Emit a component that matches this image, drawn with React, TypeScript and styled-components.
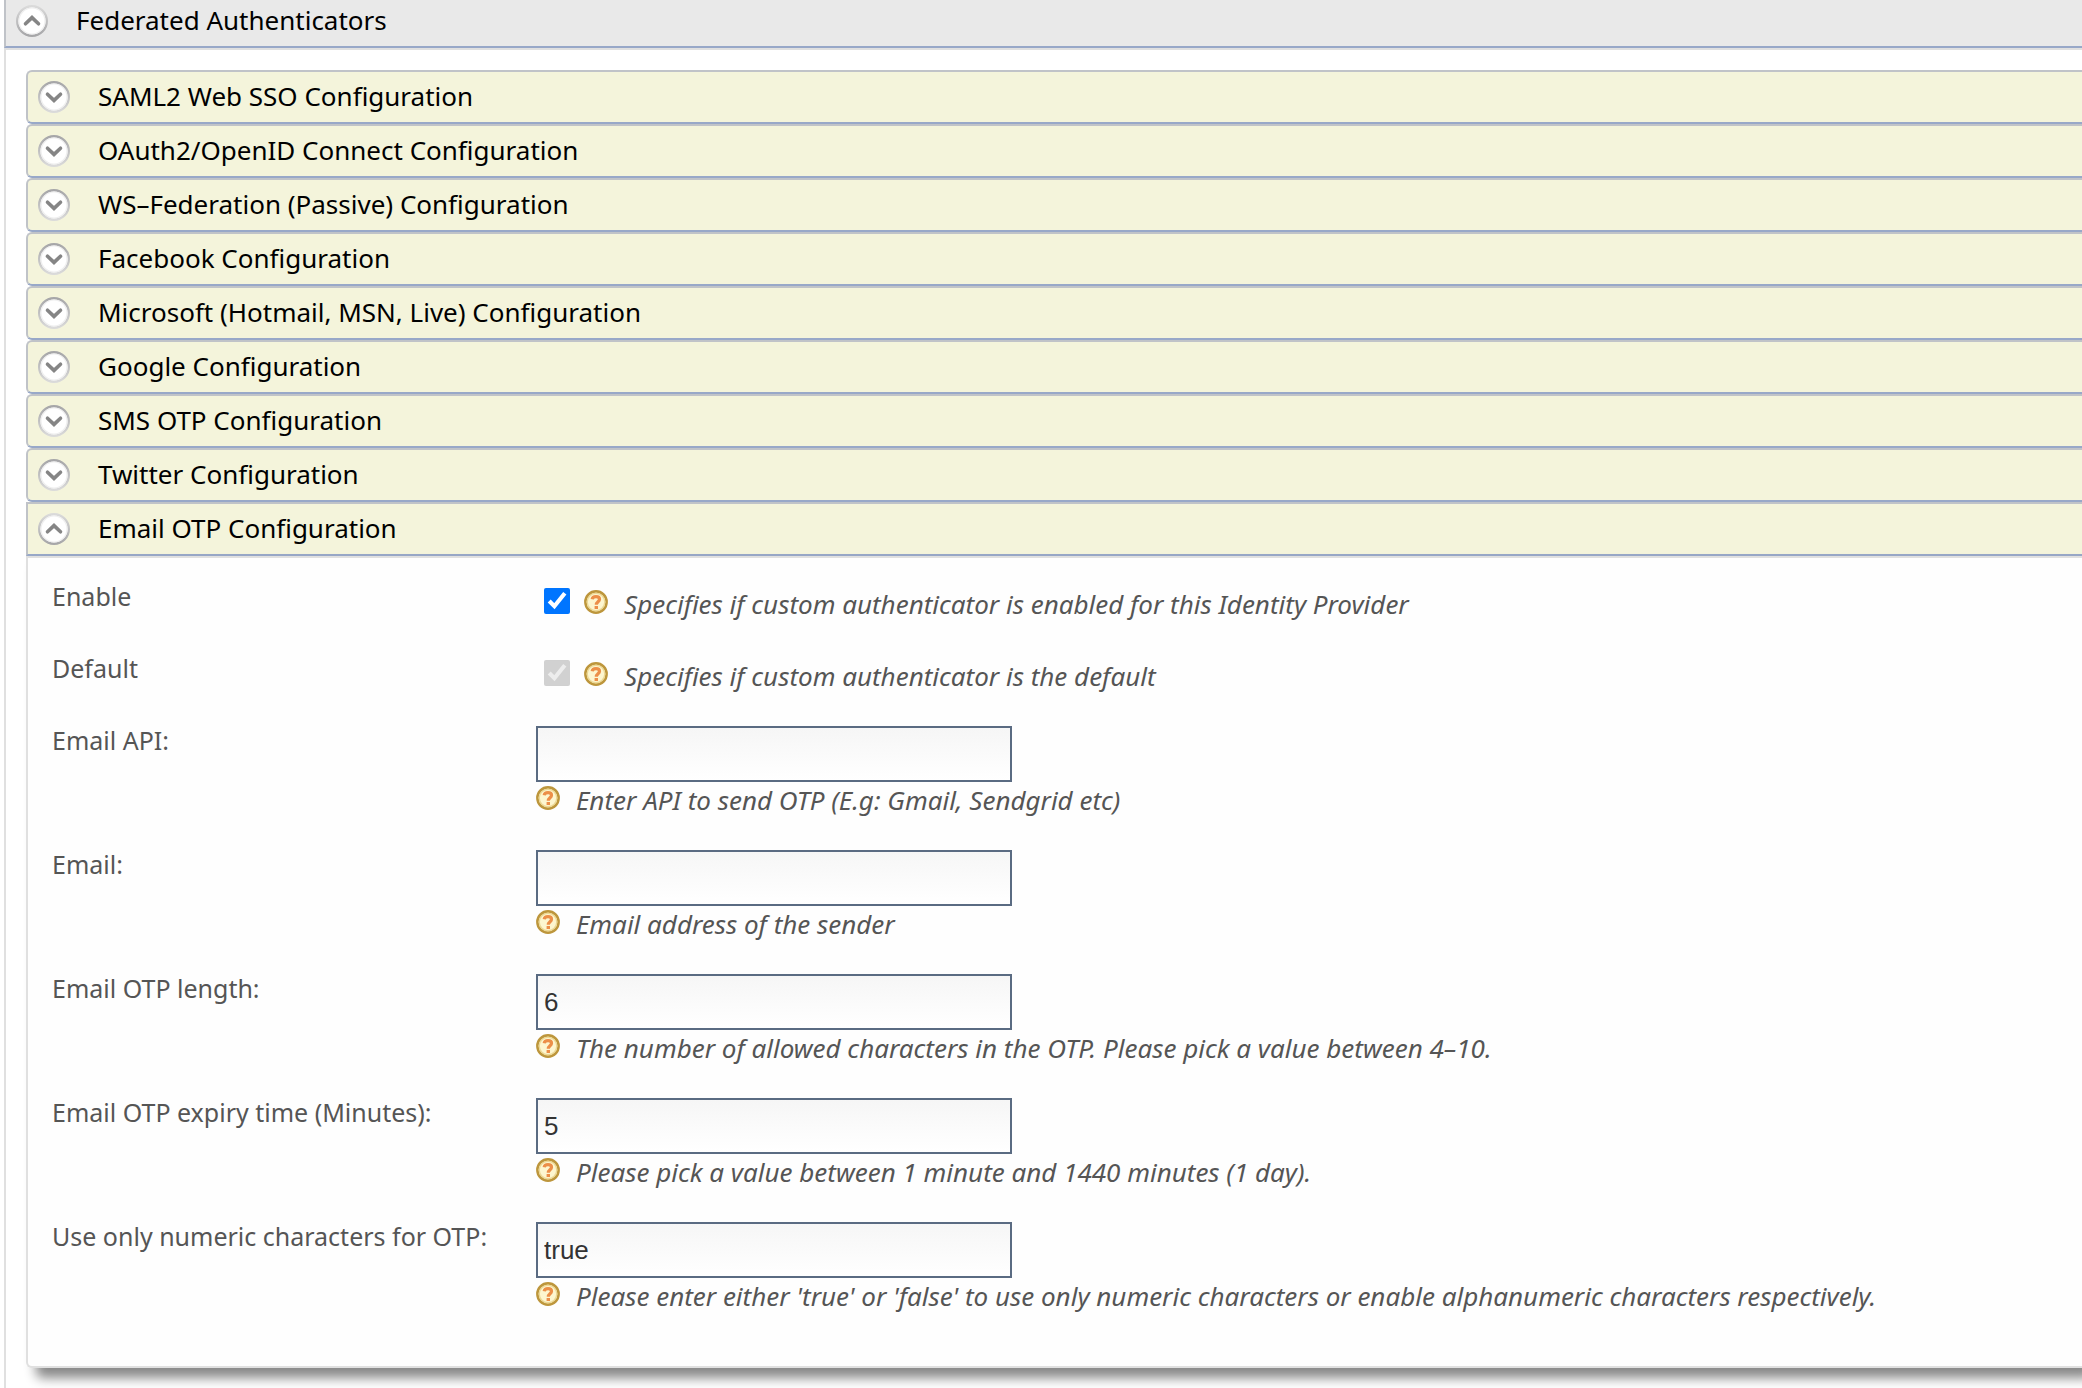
import React, { useId, useState } from "react";
import styled, { createGlobalStyle } from "styled-components";

const GlobalStyle = createGlobalStyle`
  *, *::before, *::after { box-sizing: border-box; }
  body {
    margin: 0;
    background: #fff;
    color: #555;
    font-family: "Noto Sans", "Open Sans", sans-serif;
    font-size: 25px;
    line-height: 28px;
  }
`;

const Page = styled.main`
  display: flex;
  flex-direction: column;
  min-height: 100vh;
  padding-left: 4px;
  overflow: hidden;
`;

const SectionHeading = styled.h2`
  margin: 0;
  font-size: 26px;
  font-weight: 400;
`;

const SectionToggle = styled.button`
  display: flex;
  align-items: center;
  gap: 28px;
  width: 100%;
  height: 48px;
  padding: 0 10px 4px;
  border: solid #c0c3c8;
  border-width: 0 0 2px 2px;
  border-bottom-color: #98a8c8;
  background: #e9e9e9;
  color: #000;
  font: inherit;
  text-align: left;
  cursor: pointer;
`;

const SectionBody = styled.div`
  flex: 1;
  padding: 20px 0 20px 20px;
  border: solid #e0e0e0;
  border-width: 2px 0 0 2px;
`;

const ItemHeading = styled.h3`
  margin: 0;
  font-size: 26px;
  font-weight: 400;
`;

const ItemToggle = styled.button<{ $open: boolean }>`
  display: flex;
  align-items: center;
  gap: 28px;
  width: 100%;
  height: 54px;
  padding: 0 10px;
  border: solid #c0c3c8;
  border-width: 2px 0 2px 2px;
  border-bottom-color: #98a8c8;
  border-radius: ${(p) => (p.$open ? "0" : "6px 0 0 6px")};
  background: #f4f4db;
  color: #000;
  font: inherit;
  text-align: left;
  cursor: pointer;
`;

const ToggleLabel = styled.span`
  padding-bottom: 2px;
`;

const ItemPanel = styled.div`
  padding: 24px 24px 20px;
  border: solid #e0e0e0;
  border-width: 2px 0 2px 2px;
  border-bottom-left-radius: 6px;
  background: #fefefe;
  box-shadow: 10px 10px 12px #888;
`;

const Row = styled.div<{ $compact?: boolean }>`
  display: grid;
  grid-template-columns: 484px 1fr;
  min-height: ${(p) => (p.$compact ? "72px" : "124px")};
`;

const Field = styled.div`
  display: flex;
  flex-direction: column;
  align-items: flex-start;
  gap: 4px;
`;

const CheckField = styled.div`
  display: flex;
  align-items: flex-start;
  gap: 14px;
  padding: 6px 8px 0;
`;

const CheckBox = styled.input`
  width: 26px;
  height: 26px;
  margin: 0;
`;

const TextBox = styled.input`
  width: 476px;
  height: 56px;
  padding: 0 6px;
  border: 2px solid #5a6b82;
  border-radius: 0;
  background: linear-gradient(#f6f6f6, #fff);
  color: #333;
  font-family: "Liberation Sans", Arial, sans-serif;
  font-size: 26px;
  outline: none;
`;

const Help = styled.div<{ $inline?: boolean }>`
  display: flex;
  align-items: flex-start;
  gap: 16px;
  padding-top: ${(p) => (p.$inline ? "2px" : "0")};
  font-size: 26px;
  font-style: italic;

  svg { flex: none; }
`;

const ToggleIcon = ({ open }: { open: boolean }) => {
  const gradient = useId();
  return (
    <svg width="32" height="32" viewBox="0 0 32 32" aria-hidden="true">
      <defs>
        <linearGradient id={gradient} x1="0" y1={open ? "1" : "0"} x2="0" y2={open ? "0" : "1"}>
          <stop offset="0" stopColor="#a6a6a8" />
          <stop offset="1" stopColor="#dadada" />
        </linearGradient>
      </defs>
      <circle cx="16" cy="16" r="14.800" fill="#fff" stroke={`url(#${gradient})`} strokeWidth="2.400" />
      <circle cx="16" cy="16" r="13" fill="none" stroke="#efefef" strokeWidth="1.200" />
      <path
        d={open ? "M9.500 18.800L16 12.600L22.500 18.800" : "M9.500 13.200L16 19.400L22.500 13.200"}
        fill="none"
        stroke="#858585"
        strokeWidth="3.600"
        strokeLinecap="round"
      />
    </svg>
  );
};

const HelpIcon = () => (
  <svg width="24" height="24" viewBox="0 0 24 24" aria-hidden="true">
    <circle cx="12" cy="12" r="10.600" fill="#fdf6cf" stroke="#bd963c" strokeWidth="2.600" />
    <circle cx="12" cy="12" r="8.800" fill="none" stroke="#ecd895" strokeWidth="1.400" />
    <path
      d="M8.200 9.200C8.500 7.200 10 6.600 12 6.600C14.200 6.600 15.500 7.600 15.500 9.200C15.500 11.700 12.300 11.800 12.300 14.800"
      fill="none"
      stroke="#ec8f48"
      strokeWidth="3.200"
    />
    <rect x="10.600" y="16" width="3.400" height="3" fill="#ec8f48" />
  </svg>
);

type Setting = { label: string; help: string } & (
  | { kind: "check"; disabled?: boolean }
  | { kind: "text"; value: string }
);

const settings: Setting[] = [
  { kind: "check", label: "Enable", help: "Specifies if custom authenticator is enabled for this Identity Provider" },
  { kind: "check", label: "Default", help: "Specifies if custom authenticator is the default", disabled: true },
  { kind: "text", label: "Email API:", value: "", help: "Enter API to send OTP (E.g: Gmail, Sendgrid etc)" },
  { kind: "text", label: "Email:", value: "", help: "Email address of the sender" },
  {
    kind: "text",
    label: "Email OTP length:",
    value: "6",
    help: "The number of allowed characters in the OTP. Please pick a value between 4\u201310.",
  },
  {
    kind: "text",
    label: "Email OTP expiry time (Minutes):",
    value: "5",
    help: "Please pick a value between 1 minute and 1440 minutes (1 day).",
  },
  {
    kind: "text",
    label: "Use only numeric characters for OTP:",
    value: "true",
    help: "Please enter either 'true' or 'false' to use only numeric characters or enable alphanumeric characters respectively.",
  },
];

const SettingRow = ({ setting }: { setting: Setting }) => {
  const id = useId();
  return (
    <Row $compact={setting.kind === "check"}>
      <label htmlFor={id}>{setting.label}</label>
      {setting.kind === "check" ? (
        <CheckField>
          <CheckBox id={id} type="checkbox" defaultChecked disabled={setting.disabled} />
          <Help $inline>
            <HelpIcon />
            <span>{setting.help}</span>
          </Help>
        </CheckField>
      ) : (
        <Field>
          <TextBox id={id} type="text" defaultValue={setting.value} />
          <Help>
            <HelpIcon />
            <span>{setting.help}</span>
          </Help>
        </Field>
      )}
    </Row>
  );
};

const authenticators = [
  "SAML2 Web SSO Configuration",
  "OAuth2/OpenID Connect Configuration",
  "WS\u2013Federation (Passive) Configuration",
  "Facebook Configuration",
  "Microsoft (Hotmail, MSN, Live) Configuration",
  "Google Configuration",
  "SMS OTP Configuration",
  "Twitter Configuration",
];

export default function App() {
  const [sectionOpen, setSectionOpen] = useState(true);
  const [emailOpen, setEmailOpen] = useState(true);

  return (
    <Page>
      <GlobalStyle />
      <SectionHeading>
        <SectionToggle aria-expanded={sectionOpen} onClick={() => setSectionOpen(!sectionOpen)}>
          <ToggleIcon open={sectionOpen} />
          <ToggleLabel>Federated Authenticators</ToggleLabel>
        </SectionToggle>
      </SectionHeading>
      {sectionOpen && (
        <SectionBody>
          {authenticators.map((name) => (
            <ItemHeading key={name}>
              <ItemToggle $open={false} aria-expanded={false}>
                <ToggleIcon open={false} />
                <ToggleLabel>{name}</ToggleLabel>
              </ItemToggle>
            </ItemHeading>
          ))}
          <ItemHeading>
            <ItemToggle $open={emailOpen} aria-expanded={emailOpen} onClick={() => setEmailOpen(!emailOpen)}>
              <ToggleIcon open={emailOpen} />
              <ToggleLabel>Email OTP Configuration</ToggleLabel>
            </ItemToggle>
          </ItemHeading>
          {emailOpen && (
            <ItemPanel>
              {settings.map((setting) => (
                <SettingRow key={setting.label} setting={setting} />
              ))}
            </ItemPanel>
          )}
        </SectionBody>
      )}
    </Page>
  );
}
